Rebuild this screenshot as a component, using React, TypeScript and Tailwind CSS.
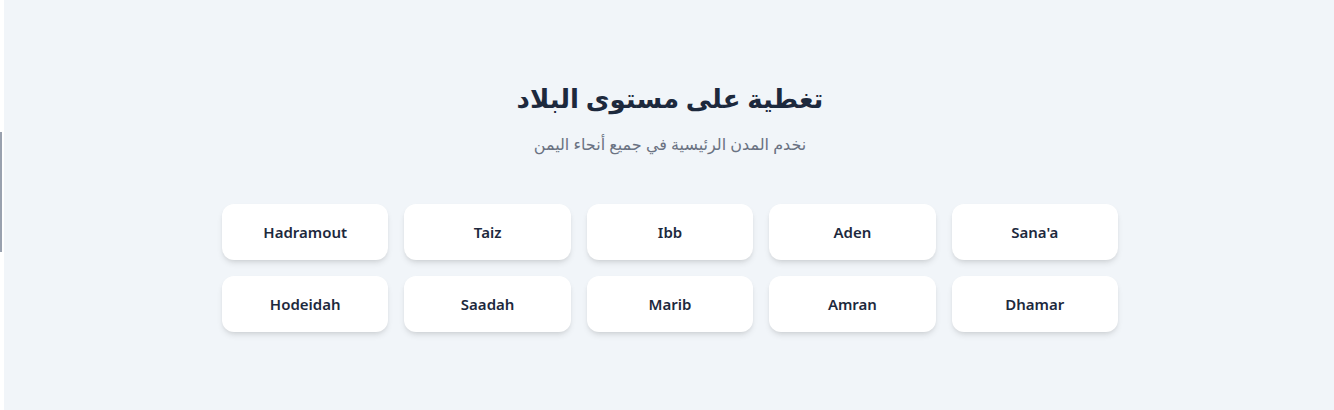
const cities = ['Sana\'a', 'Aden', 'Ibb', 'Taiz', 'Hadramout', 'Dhamar', 'Amran', 'Marib', 'Saadah', 'Hodeidah'];

export default function App() {
  return (
    <div className="flex min-h-[410px] bg-white" style={{ fontFamily: '"Noto Sans", "DejaVu Sans", sans-serif' }}>
      {/* left edge strip */}
      <div className="w-1 shrink-0 bg-white pt-[132px]">
        <div className="h-[120px] w-0.5 bg-gray-400" />
      </div>

      <section dir="rtl" className="flex-1 bg-slate-100 pt-20 pb-20 pl-[18px] pr-4">
        <div className="mx-auto max-w-4xl">
          {/* Header */}
          <div className="text-center">
            <h2 className="text-[26px] leading-9 font-semibold text-slate-800">تغطية على مستوى البلاد</h2>
            <p className="mt-4 text-base text-gray-500">نخدم المدن الرئيسية في جميع أنحاء اليمن</p>
          </div>

          {/* City grid */}
          <div className="mt-12 grid grid-cols-5 gap-4">
            {cities.map(city => (
              <div key={city} className="rounded-xl bg-white py-4 text-center shadow-md">
                <span className="text-[15px] leading-6 font-semibold text-slate-800">{city}</span>
              </div>
            ))}
          </div>
        </div>
      </section>
    </div>
  );
}
